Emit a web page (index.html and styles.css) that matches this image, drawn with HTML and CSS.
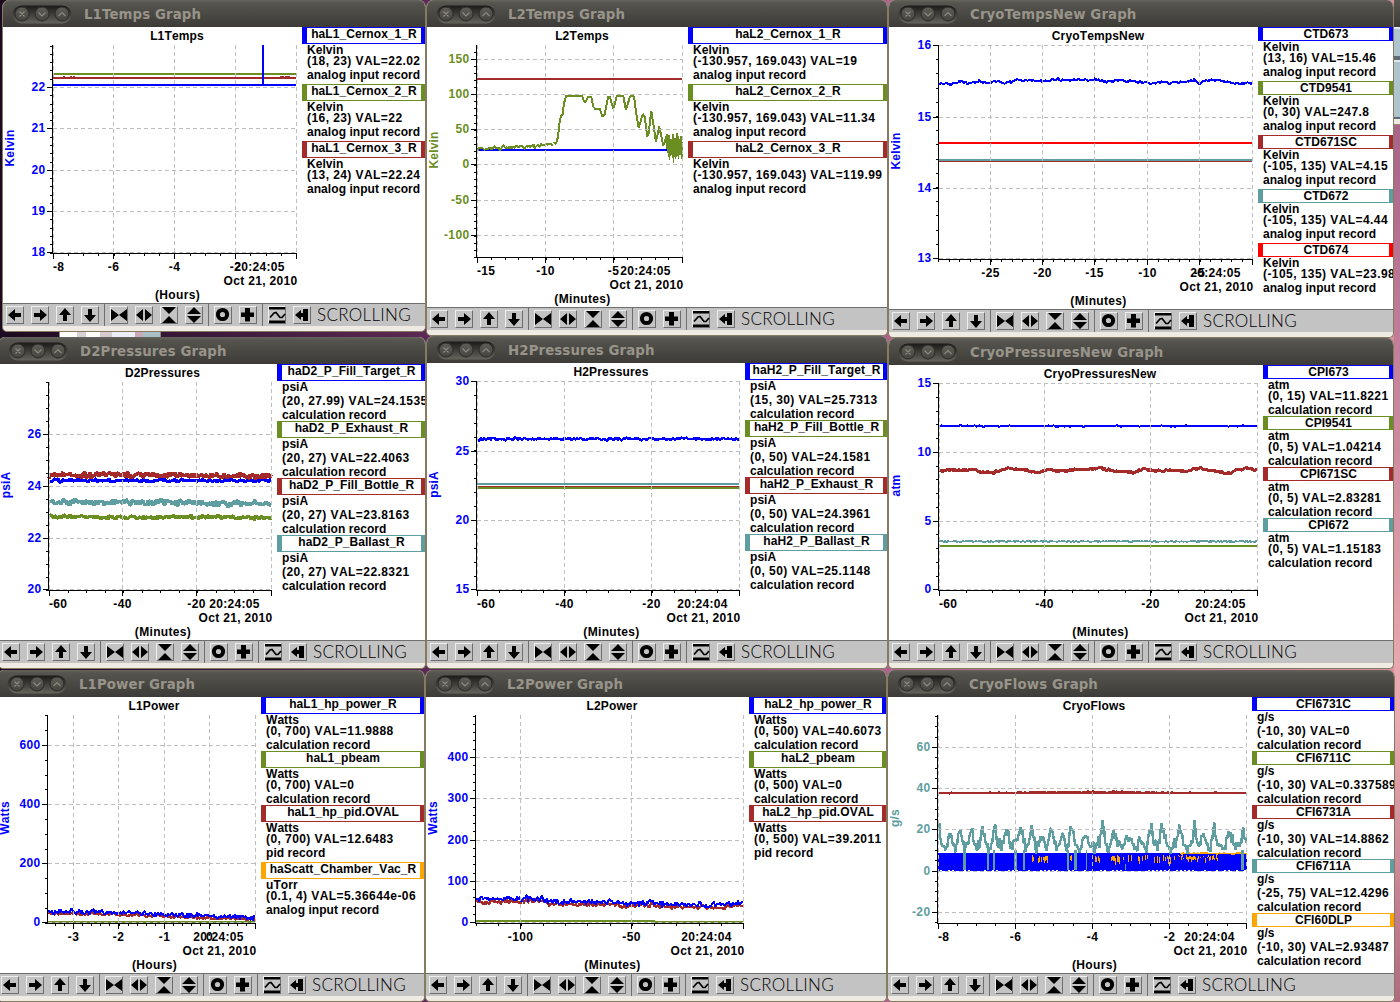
FILE: index.html
```html
<!DOCTYPE html>
<html lang="en">
<head>
  <meta charset="UTF-8">
  <meta name="viewport" content="width=device-width, initial-scale=1.0">
  <title>Strip Charts</title>
  <link rel="stylesheet" href="styles.css">
</head>
<body>
  <main class="desktop" id="desktop">
    <div class="peek-left"></div>
    <div class="peek-right">
      <div class="peek-title"></div>
      <div class="peek-body"></div>
    </div>
  </main>

  <script src="script.js"></script>
</body>
</html>
```

FILE: styles.css
```css
body {
  margin: 0;
  overflow: hidden;
  font-family: "Liberation Sans", Arial, sans-serif;
}
.desktop {
  position: relative;
  width: 1400px;
  height: 1002px;
  overflow: hidden;
  background: linear-gradient(90deg, #1d0a20 0, #5d2a55 430px, #b0668a 900px, #d88f9f 1400px);
}
.peek-left {
  position: absolute;
  left: 59px;
  top: 330px;
  width: 102px;
  height: 8px;
  box-sizing: border-box;
  border: 1px solid #8c8780;
  background: linear-gradient(90deg, #fff 0 17px, #d8d0d2 17px 26px, #fff 26px 40px, #d6ccd0 40px 52px, #eeeef8 52px 75px, #c9a9b6 75px 83px, #a9bfc8 83px);
}
.peek-right {
  position: absolute;
  left: 1394px;
  top: 0;
  width: 6px;
  height: 1002px;
  background: linear-gradient(#a8638a 125px, #e8a6ae 660px, #eaaab0 720px, #b06a80 1002px);
}
.peek-title {
  height: 27px;
  background: linear-gradient(#57564f, #3c3b37);
}
.peek-body {
  height: 98px;
  background: linear-gradient(#dfe8ec 0 2px, #afc3cd 2px 29px, #5f6a72 29px 33px, #dfe8ec 33px 35px, #afc3cd 35px 90px, #5f6a72 90px 92px, #efebe3 92px 97px, #9a8a78 97px);
}

/* window frame */
.window {
  position: absolute;
  display: flex;
  flex-direction: column;
  border: 1px solid #857a62;
  border-top: 0;
  border-radius: 7px 7px 5px 5px;
  overflow: hidden;
  background: #efebe3;
}
.titlebar {
  flex: none;
  display: flex;
  align-items: center;
  height: 27px;
  padding-left: 9px;
  background: linear-gradient(#66645d 0, #55544e 3px, #3c3b37 100%);
}
.controls {
  display: block;
  width: 60px;
  height: 19px;
  margin-top: 1px;
}
.titlebar h1 {
  margin: 1px 0 0 12px;
  font: bold 13.33px "DejaVu Sans", sans-serif;
  letter-spacing: 0.1px;
  color: #98948a;
  white-space: nowrap;
}
.content {
  flex: 1;
  display: flex;
  min-height: 0;
  background: #fff;
}
.plot {
  flex: none;
  display: block;
}

/* legend */
.legend {
  flex: 1;
  min-width: 0;
  overflow: hidden;
  font-size: 12px;
  font-weight: bold;
  line-height: 12px;
  font-kerning: none;
  letter-spacing: 0.06px;
  white-space: nowrap;
  color: #000;
}
.pen {
  padding-bottom: 1px;
}
.pen-name {
  height: 14px;
  box-sizing: border-box;
  border: 1px solid;
  border-left-width: 5px;
  border-right-width: 4px;
  display: flex;
  justify-content: center;
}
.pen-name span {
  color: #000;
}
.pen-name.deep {
  height: 17px;
}
.line {
  height: 11px;
  padding-left: 5px;
}
.line.deep {
  height: 14px;
}
.value {
  letter-spacing: 0.43px;
}
.blue { border-color: #0000ff; }
.olive { border-color: #6b8e23; }
.brown { border-color: #a52a2a; }
.teal { border-color: #5f9ea0; }
.red { border-color: #ff0000; }
.orange { border-color: #ffa500; }

/* plot text */
.plot text {
  font-size: 12px;
  font-weight: bold;
  font-kerning: none;
  letter-spacing: 0.15px;
  fill: #000;
}
.plot .num {
  letter-spacing: 0.33px;
}
.plot .axis-blue { fill: #0000ff; }
.plot .axis-olive { fill: #6b8e23; }
.plot .axis-teal { fill: #5f9ea0; }
.grid {
  stroke: #bebebe;
  stroke-dasharray: 4 3;
  shape-rendering: crispEdges;
}
.axis {
  stroke: #000;
  shape-rendering: crispEdges;
}
.series {
  fill: none;
  stroke-linejoin: bevel;
  shape-rendering: crispEdges;
}

/* toolbar */
.toolbar {
  flex: none;
  display: flex;
  align-items: center;
  height: 23px;
  box-sizing: border-box;
  border-top: 1px solid #6e6e6e;
  padding-left: 3px;
  margin-bottom: 5px;
  background: #c3c3c3;
}
.group {
  display: flex;
  gap: 7px;
}
.group + .group {
  margin-left: 5px;
  padding-left: 5px;
  border-left: 1px solid #6e6e6e;
  height: 22px;
  align-items: center;
}
.tool {
  width: 18px;
  height: 18px;
  box-sizing: border-box;
  padding: 0;
  border: 1px solid;
  border-color: #eee #6e6e6e #6e6e6e #eee;
  background: #c3c3c3;
}
.tool svg {
  display: block;
  margin: -1px;
}
.mode {
  margin-left: 6px;
  font-family: Lato, "Liberation Sans", sans-serif;
  font-weight: 300;
  font-size: 17px;
  letter-spacing: 0.3px;
  line-height: 20px;
  color: #000;
}
```

FILE: script.js
```js
const COLORS = {
  blue: '#0000ff', olive: '#6b8e23', brown: '#a52a2a',
  teal: '#5f9ea0', red: '#ff0000', orange: '#ffa500'
};

// small seeded generator so the traces are the same on every load
let seed = 7;
function rnd() {
  seed = (seed * 16807) % 2147483647;
  return seed / 2147483647;
}

function baseAt(pts, x) {
  if (x <= pts[0][0]) return pts[0][1];
  for (let i = 1; i < pts.length; i++) {
    if (x <= pts[i][0]) {
      const [xa, ya] = pts[i - 1];
      const [xb, yb] = pts[i];
      return ya + (yb - ya) * (x - xa) / (xb - xa);
    }
  }
  return pts[pts.length - 1][1];
}

function trace(color, pts, amp = 0, width = 2, step = 1) {
  let d = '';
  if (amp === 0) {
    d = 'M' + pts.map(p => p.join(' ')).join('L');
  } else {
    for (let x = pts[0][0]; x <= pts[pts.length - 1][0]; x += step) {
      const y = baseAt(pts, x) + (rnd() + rnd() - 1) * amp;
      d += (d ? 'L' : 'M') + x.toFixed(1) + ' ' + y.toFixed(1);
    }
  }
  return `<path class="series" d="${d}" stroke="${COLORS[color]}" stroke-width="${width}"/>`;
}

const flat = (color, x0, x1, y, amp, width, step) => trace(color, [[x0, y], [x1, y]], amp, width, step);

// points read at three units per pixel from an origin
const at = (ox, oy, pts) => pts.map(([x, y]) => [+(ox + x / 3).toFixed(1), +(oy + y / 3).toFixed(1)]);

function flows() {
  let out = flat('brown', 938, 1247, 792.6, 0, 2);
  out += trace('brown', [[938, 793], [1010, 792.7], [1040, 792], [1120, 791.7], [1160, 792.5], [1247, 793]], 1, 1.6);
  out += `<rect x="938" y="853" width="309" height="18" fill="${COLORS.blue}"/>`;
  for (let x = 940; x < 1246; x += 4) {
    if (rnd() < 0.55) out += `<rect x="${x}" y="870" width="2" height="1" fill="#fff"/>`;
  }
  const zones = [[1032, 1048, 0.5], [1069, 1074, 0.5], [1082, 1105, 0.25], [1111, 1140, 0.45], [1142, 1175, 0.45], [1175, 1218, 0.5]];
  zones.forEach(([a, b, p]) => {
    for (let x = a; x < b; x += 1) {
      if (rnd() < p) {
        const y = Math.round(855 + rnd() * 3);
        const h = Math.round((a > 1170 ? 1 : 3) + rnd() * 4);
        out += `<rect x="${x}" y="${y}" width="1" height="${h}" fill="${COLORS.orange}"/>`;
      }
    }
  });
  out += flat('orange', 1180, 1247, 853.5, 1, 1.5);
  const tops = [[160, 495], [192, 495], [218, 505], [255, 490], [290, 492], [325, 487], [360, 495], [402, 473],
    [437, 495], [465, 505], [497, 475], [528, 510], [555, 482], [600, 505], [650, 482], [680, 505], [730, 508],
    [762, 512], [795, 470], [825, 487], [880, 500], [926, 480], [950, 495], [985, 487], [1030, 500], [1072, 500]];
  const pts = [];
  tops.forEach(([x, y], i) => {
    pts.push([x, y]);
    const next = tops[i + 1];
    if (next) {
      const gap = next[0] - x;
      pts.push([x + gap * 0.25, 528]);
      pts.push([x + gap * 0.5, 552]);
      pts.push([x + gap * 0.75, 536]);
    }
  });
  pts.push([1082, 530]);
  out += trace('teal', at(886, 665, pts), 9, 2.4, 1);
  [233, 305, 325, 386, 415, 545, 566, 602, 721, 1068].forEach((x, i) => {
    const w = i % 3 === 0 ? 3 : 2;
    const y = x === 721 ? 864 : 850;
    out += `<rect x="${Math.round(886 + x / 3) - 1}" y="${y}" width="${x === 602 || x === 721 ? 1 : w}" height="${870 - y}" fill="${COLORS.teal}"/>`;
  });
  return out;
}

function l2burst() {
  let d = 'M666 143';
  for (let x = 667; x <= 682; x += 1) {
    const far = Math.abs(x - 673) * 0.5;
    const up = 9 + rnd() * 8 - far;
    const down = 7 + rnd() * 8 - far;
    d += `L${x.toFixed(1)} ${(148 - up).toFixed(1)}L${(x + 0.5).toFixed(1)} ${(148 + down).toFixed(1)}`;
  }
  return `<path class="series" d="${d}" stroke="${COLORS.olive}" stroke-width="1.8"/>`;
}

const HOUR = '(Hours)';
const MIN = '(Minutes)';
const CALC = 'calculation record';
const ANALOG = 'analog input record';

// x, y is the top left corner of the client width; bar is the top of the toolbar
const windows = [
  {
    title: 'L1Temps', x: 3, y: 0, right: 425, bar: 303, legend: 302,
    axis: [53, 296, 45, 253], mid: 177, unit: 'Kelvin', tone: 'blue', xUnit: HOUR, time: '20:24:05',
    xt: [[53, '-8'], [113, '-6'], [174, '-4'], [235, '-2'], [296]], xm: 15.2,
    yt: [[87, '22'], [128, '21'], [170, '20'], [211, '19'], [252, '18']], ym: 8.28,
    draw: () => flat('olive', 53, 296, 74) + flat('brown', 53, 296, 78) +
      flat('brown', 63, 77, 77, 1.4, 1) + flat('brown', 280, 290, 77, 1.4, 1) +
      flat('blue', 53, 296, 85) + trace('blue', [[263, 45], [263, 85]]),
    pens: [['haL1_Cernox_1_R', 'blue', 'Kelvin', '(18, 23) VAL=22.02', ANALOG],
      ['haL1_Cernox_2_R', 'olive', 'Kelvin', '(16, 23) VAL=22', ANALOG],
      ['haL1_Cernox_3_R', 'brown', 'Kelvin', '(13, 24) VAL=22.24', ANALOG]]
  },
  {
    title: 'L2Temps', x: 427, y: 0, right: 887, bar: 307, legend: 688,
    axis: [477, 682, 45, 257], mid: 582, unit: 'Kelvin', tone: 'olive', xUnit: MIN, time: '20:24:05',
    xt: [[477, '-15'], [545, '-10'], [613, '-5'], [682]], xm: 13.65,
    yt: [[59, '150'], [94, '100'], [129, '50'], [164, '0'], [200, '-50'], [235, '-100']], ym: 7.06,
    draw: () => flat('brown', 477, 682, 79) + flat('blue', 477, 682, 150) +
      trace('olive', at(426, 0, [[155, 446], [230, 443], [300, 439], [350, 435], [372, 434], [382, 426]]), 2.6, 2) +
      trace('olive', at(426, 0, [[382, 426], [390, 431], [396, 410], [400, 372], [404, 350], [410, 342], [414, 310],
        [420, 288], [468, 288], [474, 303], [478, 308], [486, 290], [496, 290], [502, 320], [508, 327], [522, 327],
        [529, 350], [536, 342], [547, 289], [552, 292], [562, 327], [572, 289], [592, 289], [600, 330], [612, 289],
        [624, 289], [632, 350], [638, 384], [650, 342], [656, 350], [664, 410], [668, 400], [676, 332], [690, 425],
        [700, 380], [712, 438], [722, 408]])) + l2burst(),
    pens: [['haL2_Cernox_1_R', 'blue', 'Kelvin', '(-130.957, 169.043) VAL=19', ANALOG],
      ['haL2_Cernox_2_R', 'olive', 'Kelvin', '(-130.957, 169.043) VAL=11.34', ANALOG],
      ['haL2_Cernox_3_R', 'brown', 'Kelvin', '(-130.957, 169.043) VAL=119.99', ANALOG]]
  },
  {
    title: 'CryoTempsNew', x: 889, y: 0, right: 1393, bar: 309, legend: 1258,
    axis: [939, 1252, 45, 259], mid: 1098, unit: 'Kelvin', tone: 'blue', xUnit: MIN, time: '20:24:05',
    xt: [[990, '-25'], [1042, '-20'], [1094, '-15'], [1147, '-10'], [1199, '-5'], [1252]], xm: 10.45,
    yt: [[45, '16'], [117, '15'], [188, '14'], [258, '13']], ym: 14.2,
    draw: () => trace('blue', at(886, 0, [[160, 252], [200, 251], [220, 242], [245, 249], [280, 244], [300, 249],
      [340, 243], [350, 248], [380, 245], [400, 239], [440, 243], [470, 244], [500, 238], [540, 240], [575, 240],
      [600, 241], [630, 237], [660, 245], [690, 241], [720, 242], [760, 246], [800, 250], [830, 246], [860, 250],
      [900, 243], [925, 240], [940, 250], [960, 243], [990, 240], [1030, 248], [1060, 251], [1080, 248], [1100, 254]]), 1.6, 2) +
      flat('red', 939, 1252, 143) + flat('brown', 939, 1252, 161.5, 0, 1) + flat('teal', 939, 1252, 160),
    pens: [['CTD673', 'blue', 'Kelvin', '(13, 16) VAL=15.46', ANALOG],
      ['CTD9541', 'olive', 'Kelvin', '(0, 30) VAL=247.8', ANALOG],
      ['CTD671SC', 'brown', 'Kelvin', '(-105, 135) VAL=4.15', ANALOG],
      ['CTD672', 'teal', 'Kelvin', '(-105, 135) VAL=4.44', ANALOG],
      ['CTD674', 'red', 'Kelvin', '(-105, 135) VAL=23.98', ANALOG]]
  },
  {
    title: 'D2Pressures', x: -1, y: 337, right: 425, bar: 640, legend: 277,
    axis: [49, 271, 382, 590], mid: 162.5, unit: 'psiA', tone: 'blue', xUnit: MIN, time: '20:24:05',
    xt: [[49, '-60'], [122, '-40'], [196, '-20'], [271]], xm: 18.5,
    yt: [[434, '26'], [486, '24'], [538, '22'], [589, '20']], ym: 13,
    draw: () => flat('blue', 49, 271, 480.5, 2.2, 3) +
      trace('brown', [[49, 475], [160, 475], [271, 476]], 3.4, 3.4) +
      trace('teal', [[49, 502], [110, 502], [271, 504]], 4, 3.4) +
      trace('olive', [[49, 516.7], [271, 517.5]], 2.8, 3.2),
    pens: [['haD2_P_Fill_Target_R', 'blue', 'psiA', '(20, 27.99) VAL=24.1535', CALC],
      ['haD2_P_Exhaust_R', 'olive', 'psiA', '(20, 27) VAL=22.4063', CALC],
      ['haD2_P_Fill_Bottle_R', 'brown', 'psiA', '(20, 27) VAL=23.8163', CALC],
      ['haD2_P_Ballast_R', 'teal', 'psiA', '(20, 27) VAL=22.8321', CALC]]
  },
  {
    title: 'H2Pressures', x: 427, y: 336, right: 887, bar: 640, legend: 745,
    axis: [477, 739, 381, 590], mid: 611, unit: 'psiA', tone: 'blue', xUnit: MIN, time: '20:24:04',
    xt: [[477, '-60'], [564, '-40'], [651, '-20'], [739]], xm: 21.8,
    yt: [[381, '30'], [451, '25'], [520, '20'], [589, '15']], ym: 13.9,
    draw: () => flat('blue', 477, 739, 439, 2, 2.4) + flat('teal', 477, 739, 484) +
      flat('brown', 477, 739, 486.5, 0, 1) + flat('olive', 477, 739, 488),
    pens: [['haH2_P_Fill_Target_R', 'blue', 'psiA', '(15, 30) VAL=25.7313', CALC],
      ['haH2_P_Fill_Bottle_R', 'olive', 'psiA', '(0, 50) VAL=24.1581', CALC],
      ['haH2_P_Exhaust_R', 'brown', 'psiA', '(0, 50) VAL=24.3961', CALC],
      ['haH2_P_Ballast_R', 'teal', 'psiA', '(0, 50) VAL=25.1148', CALC]]
  },
  {
    title: 'CryoPressuresNew', x: 889, y: 338, right: 1393, bar: 640, legend: 1263,
    axis: [939, 1257, 383, 590], mid: 1100, unit: 'atm', tone: 'blue', xUnit: MIN, time: '20:24:05',
    xt: [[939, '-60'], [1044, '-40'], [1150, '-20'], [1257]], xm: 26.5,
    yt: [[383, '15'], [452, '10'], [521, '5'], [589, '0']], ym: 13.75,
    draw: () => flat('blue', 939, 1257, 426, 0.9, 2) +
      trace('brown', at(886, 335, [[160, 410], [195, 402], [225, 409], [255, 404], [290, 410], [320, 413], [345, 405],
        [370, 398], [400, 402], [430, 408], [455, 415], [490, 402], [520, 409], [560, 406], [600, 405], [635, 398],
        [665, 405], [700, 408], [740, 412], [775, 401], [810, 408], [870, 405], [900, 410], [935, 399], [980, 407],
        [1030, 415], [1060, 404], [1085, 398], [1115, 405]]), 1.8, 3) +
      flat('teal', 939, 1257, 541.4, 0.8, 1.8) + flat('olive', 939, 1257, 546),
    pens: [['CPI673', 'blue', 'atm', '(0, 15) VAL=11.8221', CALC],
      ['CPI9541', 'olive', 'atm', '(0, 5) VAL=1.04214', CALC],
      ['CPI671SC', 'brown', 'atm', '(0, 5) VAL=2.83281', CALC],
      ['CPI672', 'teal', 'atm', '(0, 5) VAL=1.15183', CALC]]
  },
  {
    title: 'L1Power', x: -2, y: 670, right: 424, bar: 973, legend: 261,
    axis: [48, 255, 715, 923], mid: 154, unit: 'Watts', tone: 'blue', xUnit: HOUR, time: '20:24:05',
    xt: [[73, '-3'], [118, '-2'], [164, '-1'], [209, '0'], [255]], xm: 9.1,
    yt: [[745, '600'], [804, '400'], [863, '200'], [922, '0']], ym: 14.8,
    draw: () => trace('brown', at(0, 665, [[144, 746], [300, 746], [480, 752], [600, 758], [766, 763]]), 2.4, 2.2) +
      trace('blue', at(0, 665, [[144, 741], [300, 741], [480, 747], [600, 752], [766, 758]]), 3.4, 2) +
      flat('olive', 48, 255, 922),
    pens: [['haL1_hp_power_R', 'blue', 'Watts', '(0, 700) VAL=11.9888', CALC],
      ['haL1_pbeam', 'olive', 'Watts', '(0, 700) VAL=0', CALC],
      ['haL1_hp_pid.OVAL', 'brown', 'Watts', '(0, 700) VAL=12.6483', 'pid record'],
      ['haScatt_Chamber_Vac_R', 'orange', 'uTorr', '(0.1, 4) VAL=5.36644e-06', ANALOG]]
  },
  {
    title: 'L2Power', x: 426, y: 670, right: 886, bar: 973, legend: 749,
    axis: [476, 743, 715, 923], mid: 612, unit: 'Watts', tone: 'blue', xUnit: MIN, time: '20:24:04',
    xt: [[520, '-100'], [631, '-50'], [743]], xm: 22.25,
    yt: [[757, '400'], [798, '300'], [840, '200'], [881, '100'], [922, '0']], ym: 8.26,
    draw: () => trace('brown', at(426, 665, [[150, 711], [350, 708], [370, 718], [560, 718], [600, 726], [680, 718],
      [720, 727], [900, 727], [952, 717]]), 3.4, 2.2) +
      trace('blue', at(426, 665, [[150, 701], [350, 700], [370, 711], [560, 711], [600, 718], [680, 711],
        [720, 719], [900, 719], [952, 712]]), 3.8, 2) +
      flat('olive', 476, 655, 921) + flat('olive', 655, 743, 922),
    pens: [['haL2_hp_power_R', 'blue', 'Watts', '(0, 500) VAL=40.6073', CALC],
      ['haL2_pbeam', 'olive', 'Watts', '(0, 500) VAL=0', CALC],
      ['haL2_hp_pid.OVAL', 'brown', 'Watts', '(0, 500) VAL=39.2011', 'pid record']]
  },
  {
    title: 'CryoFlows', x: 888, y: 670, right: 1394, bar: 973, legend: 1252,
    axis: [938, 1246, 715, 923], mid: 1094, unit: 'g/s', tone: 'teal', xUnit: HOUR, time: '20:24:04',
    xt: [[938, '-8'], [1015, '-6'], [1092, '-4'], [1169, '-2'], [1246]], xm: 19.27,
    yt: [[747, '60'], [788, '40'], [829, '20'], [871, '0'], [912, '-20']], ym: 10.3,
    draw: flows,
    pens: [['CFI6731C', 'blue', 'g/s', '(-10, 30) VAL=0', CALC],
      ['CFI6711C', 'olive', 'g/s', '(-10, 30) VAL=0.337589', CALC],
      ['CFI6731A', 'brown', 'g/s', '(-10, 30) VAL=14.8862', CALC],
      ['CFI6711A', 'teal', 'g/s', '(-25, 75) VAL=12.4296', CALC],
      ['CFI60DLP', 'orange', 'g/s', '(-10, 30) VAL=2.93487', CALC]]
  }
];

function plot(w) {
  const [x0, x1, y0, y1] = w.axis;
  const top = w.y + 27;
  const width = w.legend - w.x;
  const height = w.bar - top;
  let grid = '';
  let axis = `M${x0 - 0.5} ${y0}V${y1 + 1}M${x0 - 1} ${y1 + 0.5}H${x1 + 1}`;
  let text = `<text x="${w.mid}" y="${top + 13}" text-anchor="middle">${w.title}</text>`;

  w.xt.forEach(([x, label]) => {
    grid += `M${x + 0.5} ${y0}V${y1}`;
    axis += `M${x + 0.5} ${y1}v6`;
    if (!label) return;
    const edge = x === x0;
    text += `<text class="num" x="${edge ? x : x + 0.5}" y="${y1 + 18}" text-anchor="${edge ? 'start' : 'middle'}">${label}</text>`;
  });
  w.yt.forEach(([y, label]) => {
    grid += `M${x0} ${y + 0.5}H${x1}`;
    axis += `M${x0 - 6} ${y + 0.5}h6`;
    text += `<text class="num axis-${w.tone}" x="${x0 - 7.6}" y="${y + 4}" text-anchor="end">${label}</text>`;
  });

  // minor ticks run both ways from the first labelled one
  for (let x = x1; x >= x0 - 1; x -= w.xm) axis += `M${Math.round(x) + 0.5} ${y1}v3`;
  for (let y = w.yt[0][0]; y <= y1; y += w.ym) axis += `M${x0 - 3} ${Math.round(y) + 0.5}h3`;
  for (let y = w.yt[0][0]; y >= y0; y -= w.ym) axis += `M${x0 - 3} ${Math.round(y) + 0.5}h3`;

  const ly = (y0 + y1) / 2 - 1;
  const lx = w.x + 11;
  text += `<text class="num" x="${x1 - 36.5}" y="${y1 + 18}" text-anchor="middle">${w.time}</text>`;
  text += `<text class="num" x="${x1 + 1.5}" y="${y1 + 32}" text-anchor="end">Oct 21, 2010</text>`;
  text += `<text class="num" x="${w.mid + 0.5}" y="${y1 + 46}" text-anchor="middle">${w.xUnit}</text>`;
  text += `<text class="axis-${w.tone}" transform="translate(${lx} ${ly}) rotate(-90)" text-anchor="middle">${w.unit}</text>`;

  return `<svg class="plot" width="${width}" height="${height}" viewBox="${w.x} ${top} ${width} ${height}">
    ${w.draw()}
    <path class="grid" d="${grid}"/>
    <path class="axis" d="${axis}"/>
    ${text}
  </svg>`;
}

const deep = s => /[_gpqy(]/.test(s) ? ' deep' : '';

function pen([name, color, unit, value, record]) {
  return `<div class="pen">
    <div class="pen-name ${color}${deep(name)}"><span>${name}</span></div>
    <div class="line${deep(unit)}">${unit}</div>
    <div class="line value deep">${value}</div>
    <div class="line${deep(record)}">${record}</div>
  </div>`;
}

const ICONS = [
  [
    '<path d="M2 9L9 3V7H15V11H9V15Z"/>',
    '<path d="M16 9L9 3V7H3V11H9V15Z"/>',
    '<path d="M9 2L3 9H7V15H11V9H15Z"/>',
    '<path d="M9 16L3 9H7V3H11V9H15Z"/>'
  ],
  [
    '<path d="M1 3L9 9L1 15ZM17 3L9 9L17 15Z"/>',
    '<path d="M1 9L8 3V15ZM17 9L10 3V15Z"/>',
    '<path d="M2 1H16L9 8ZM2 17H16L9 10Z"/>',
    '<path d="M9 1L16 8H2ZM9 17L16 10H2Z"/>'
  ],
  [
    '<circle cx="8.500" cy="8.500" r="4.600" fill="none" stroke="#000" stroke-width="4"/>',
    '<path d="M6 2H11V6.500H15V11H11V15.500H6V11H2V6.500H6Z"/>'
  ],
  [
    '<path d="M1 1H17V3.4H1ZM1 14.4H17V17H1Z"/><path d="M2 11.5L6 7L8 6.5L12 11.5L14 11.5L17 8" fill="none" stroke="#000" stroke-width="1.7"/>',
    '<path d="M2 9L8 4V7H10V3H15V15H10V11H8V14Z"/>'
  ]
];

const toolbar = ICONS.map(g => '<div class="group">' +
  g.map(i => `<button class="tool"><svg width="18" height="18" viewBox="0 0 18 18">${i}</svg></button>`).join('') +
  '</div>').join('') + '<span class="mode">SCROLLING</span>';

const controls = `<svg class="controls" viewBox="0 0 60 19">
  <defs>
    <linearGradient id="pill" x2="0" y2="1"><stop offset="0" stop-color="#1b1a18"/><stop offset="1" stop-color="#66645c"/></linearGradient>
    <linearGradient id="knob" x2="0" y2="1"><stop offset="0" stop-color="#605e57"/><stop offset="1" stop-color="#45443f"/></linearGradient>
  </defs>
  <rect x="0.5" y="0.5" width="59" height="18" rx="9" fill="url(#pill)"/>
  <g fill="url(#knob)" stroke="#2b2a27"><circle cx="10" cy="9" r="7"/><circle cx="30" cy="9" r="7"/><circle cx="50" cy="9" r="7"/></g>
  <path d="M7.5 6.5L12.5 11.5M12.5 6.5L7.5 11.5M26.5 7.5L30 11L33.5 7.5M46.5 11L50 7.5L53.5 11" fill="none" stroke="#8f8b80" stroke-width="1.1"/>
</svg>`;

const desktop = document.getElementById('desktop');
windows.forEach(w => {
  const el = document.createElement('section');
  el.className = 'window';
  el.style.left = (w.x - 1) + 'px';
  el.style.top = w.y + 'px';
  el.style.width = (w.right - w.x) + 'px';
  el.style.height = (w.bar + 28 - w.y) + 'px';
  el.innerHTML = `
    <header class="titlebar">${controls}<h1>${w.title} Graph</h1></header>
    <div class="content">${plot(w)}<div class="legend">${w.pens.map(pen).join('')}</div></div>
    <div class="toolbar">${toolbar}</div>`;
  desktop.appendChild(el);
});
```
